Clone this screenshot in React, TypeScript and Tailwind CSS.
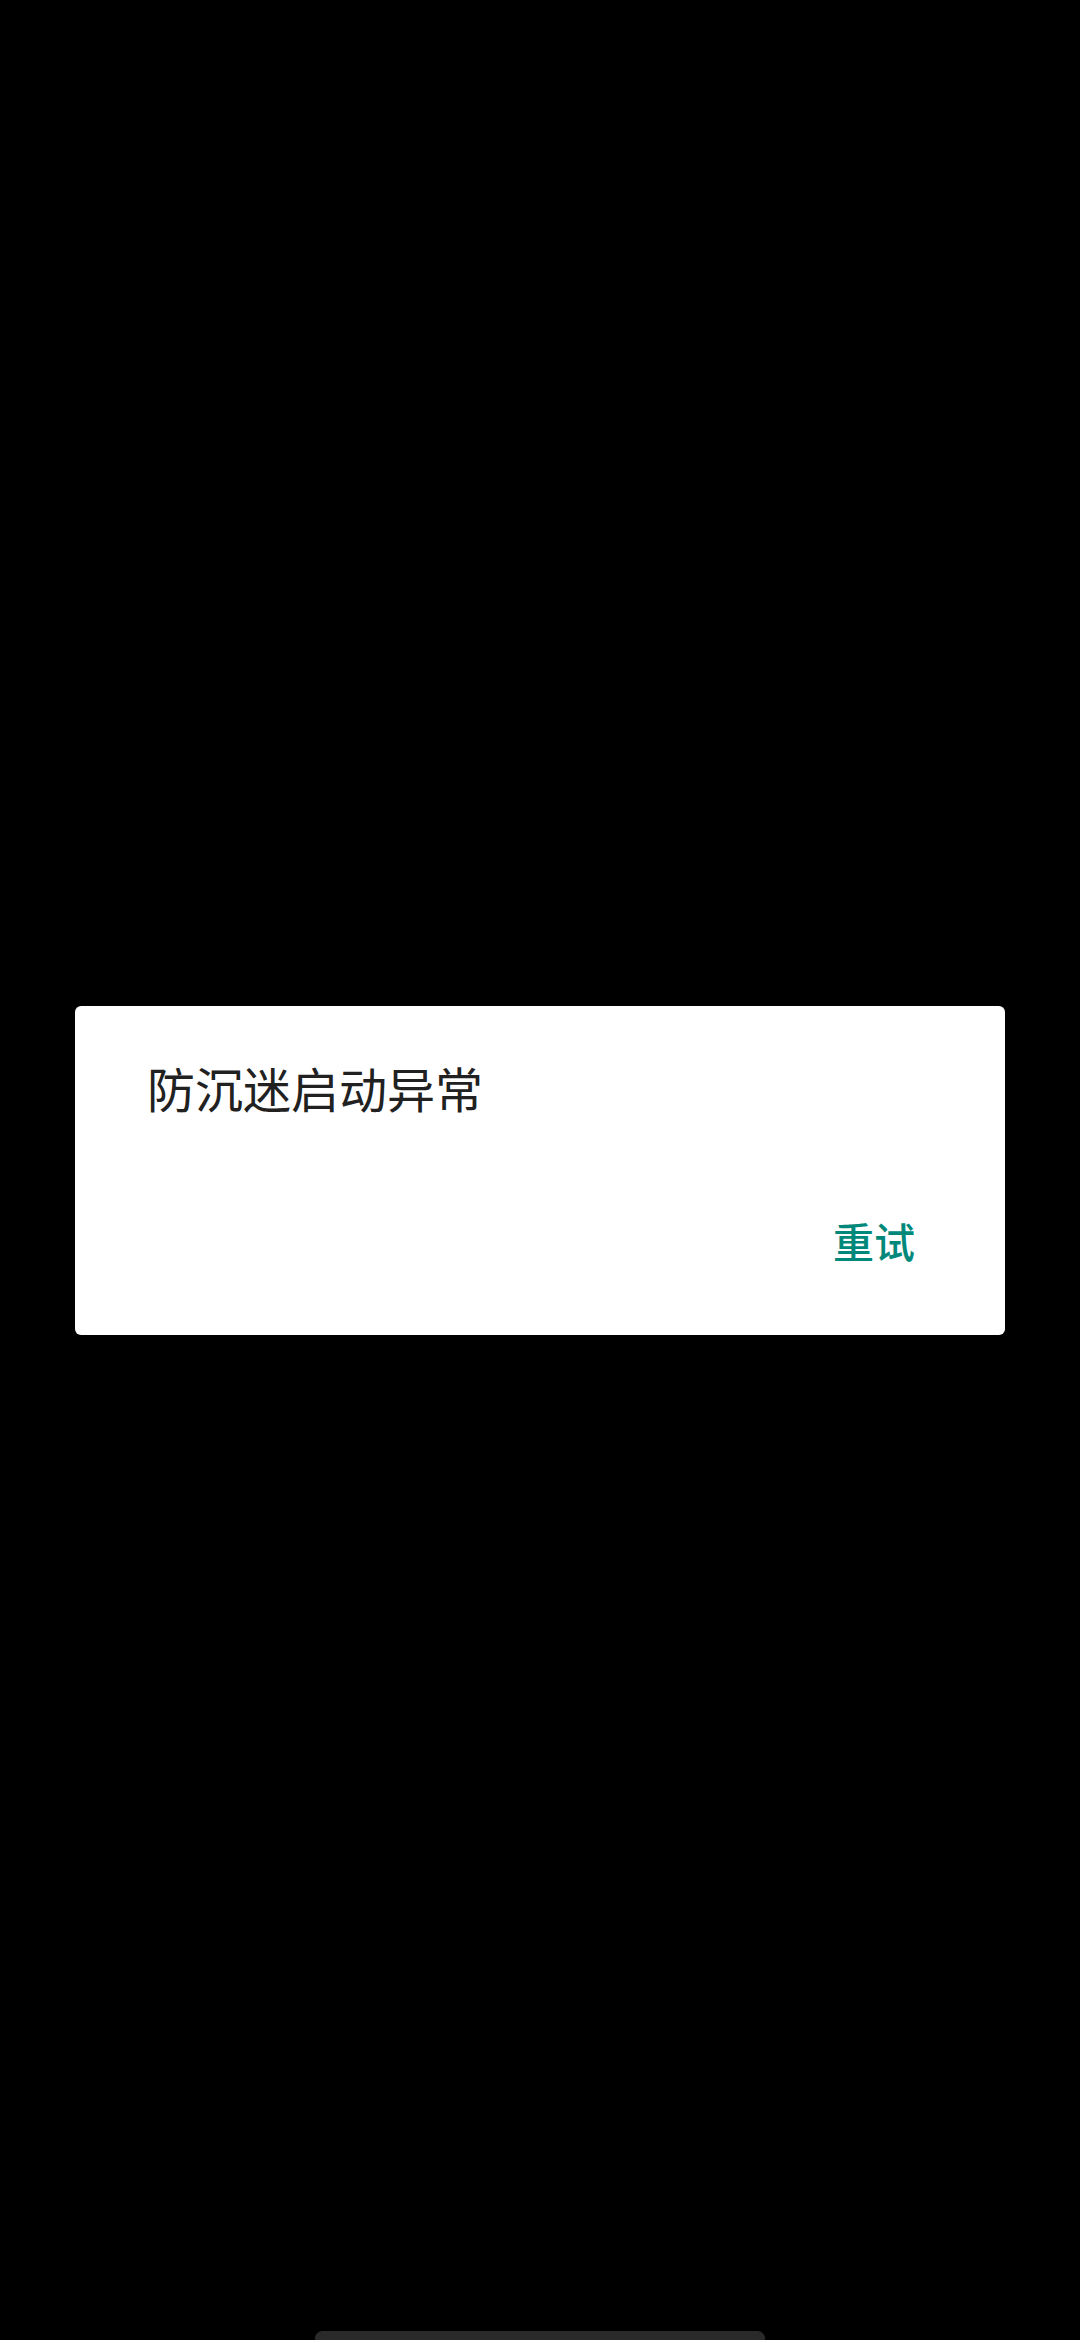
import React from 'react';

const App = () => {
  return (
    <div
      className="relative flex w-[1080px] h-[2340px] items-center justify-center bg-black"
      style={{ fontFamily: '"Noto Sans CJK SC", "Noto Sans", sans-serif' }}
    >
      {/* 对话框 */}
      <div className="flex flex-col w-[930px] h-[329px] bg-white rounded-[6px]">
        <div className="pt-[53px] pl-[72px] text-[48px] leading-[56px] text-[#212121]">
          防沉迷启动异常
        </div>
        <div className="flex justify-end mt-auto pb-[71px] pr-[90px]">
          <button className="text-[41px] leading-[48px] font-medium text-[#00897b]">重试</button>
        </div>
      </div>

      {/* 底部导航条 */}
      <div className="absolute bottom-[-6px] left-[315px] w-[450px] h-[15px] rounded-full bg-[#2a2a2a]" />
    </div>
  );
};

export default App;
